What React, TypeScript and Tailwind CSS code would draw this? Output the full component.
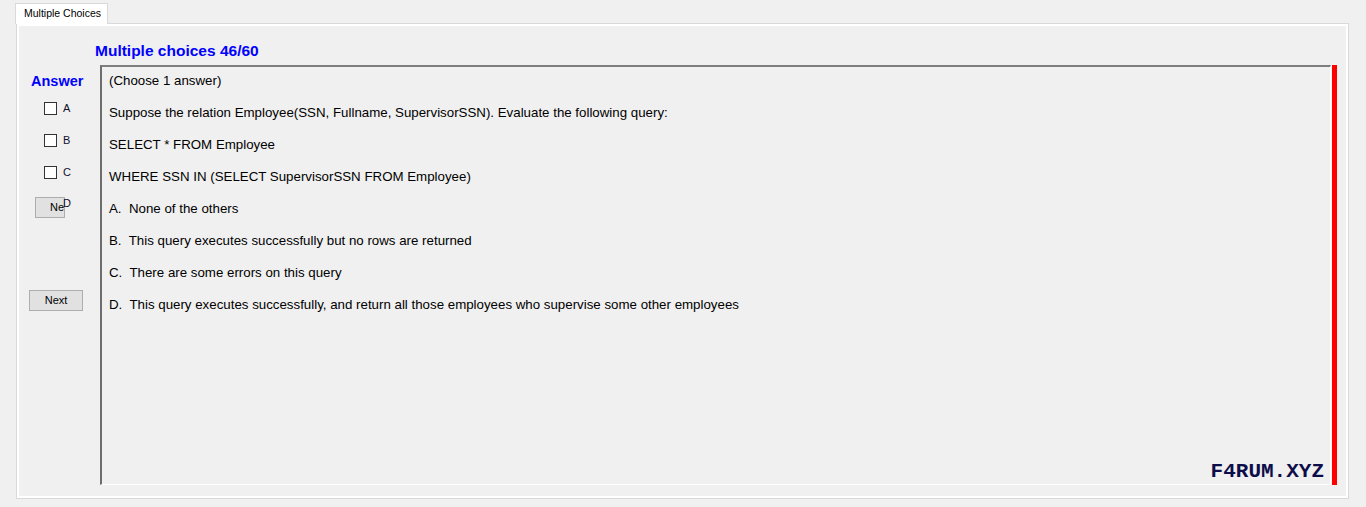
import React from 'react';

const lines = [
  '(Choose 1 answer)',
  'Suppose the relation Employee(SSN, Fullname, SupervisorSSN). Evaluate the following query:',
  'SELECT * FROM Employee',
  'WHERE SSN IN (SELECT SupervisorSSN FROM Employee)',
  'A.  None of the others',
  'B.  This query executes successfully but no rows are returned',
  'C.  There are some errors on this query',
  'D.  This query executes successfully, and return all those employees who supervise some other employees',
];

function CheckRow({ label }: { label: string }) {
  return (
    <div className="flex h-4 items-center pl-[25px]">
      <span className="block h-[13px] w-[13px] border border-[#333333] bg-white" />
      <span className="ml-[6px] text-[11px] leading-4 text-[#10102a]">{label}</span>
    </div>
  );
}

export default function App() {
  return (
    <div
      className="h-[507px] w-full overflow-hidden bg-[#f0f0f0] text-black"
      style={{ fontFamily: '"Liberation Sans", Arial, sans-serif' }}
    >
      {/* tab strip */}
      <div className="flex h-[23px] items-end pl-[15px]">
        <div className="relative z-10 -mb-px flex h-[21px] w-[93px] items-center border border-b-0 border-[#d9d9d9] bg-white pb-px pl-[8px] text-[10.5px]">
          Multiple Choices
        </div>
      </div>

      {/* tab page */}
      <div className="ml-[16px] mr-[17px] h-[476px] border border-[#d9d9d9] bg-white p-[2px]">
        <div className="flex h-full flex-col bg-[#f0f0f0]">
          <div className="mt-[16px] h-[18px] pl-[76px] text-[15.5px] font-bold leading-[18px] text-[#0000ff]">
            Multiple choices 46/60
          </div>

          <div className="mt-[5px] flex">
            {/* answer column */}
            <div className="flex w-[81px] shrink-0 flex-col">
              <div className="mt-[8px] h-4 pl-[12px] text-[14.5px] font-bold leading-4 text-[#0000ff]">
                Answer
              </div>
              <div className="mt-[11px] flex flex-col gap-4">
                <CheckRow label="A" />
                <CheckRow label="B" />
                <CheckRow label="C" />
                <div className="relative h-4">
                  <button className="ml-[16px] mt-px flex h-[21px] w-[30px] items-center overflow-hidden whitespace-nowrap border border-[#adadad] bg-[#e1e1e1] pl-[14px] text-[11px] text-black">
                    Next
                  </button>
                  <span className="absolute left-[44px] top-[-1px] text-[11px] leading-4 text-[#10102a]">D</span>
                </div>
              </div>
              <button className="ml-[10px] mt-[78px] h-[21px] w-[54px] border border-[#adadad] bg-[#e1e1e1] text-[11px] text-black">
                Next
              </button>
            </div>

            {/* question box */}
            <div className="relative h-[420px] flex-1 border-l-2 border-t-2 border-b border-r border-l-[#6e6e6e] border-t-[#7e7e7e] border-b-white border-r-white">
              <div className="flex flex-col gap-4 pl-[7px] pt-[6px] text-[13.3px] leading-4">
                {lines.map((line, i) => (
                  <p key={i} className="whitespace-pre">
                    {line}
                  </p>
                ))}
              </div>
              <div
                className="absolute bottom-[1px] right-[6px] text-[21px] font-bold leading-[22px] text-[#0d0d4a]"
                style={{ fontFamily: '"Liberation Mono", "DejaVu Sans Mono", monospace' }}
              >
                F4RUM.XYZ
              </div>
            </div>
            <div className="ml-px h-[420px] w-[5px] bg-[#ff0000]" />
            <div className="w-[9px] shrink-0" />
          </div>
        </div>
      </div>
    </div>
  );
}
